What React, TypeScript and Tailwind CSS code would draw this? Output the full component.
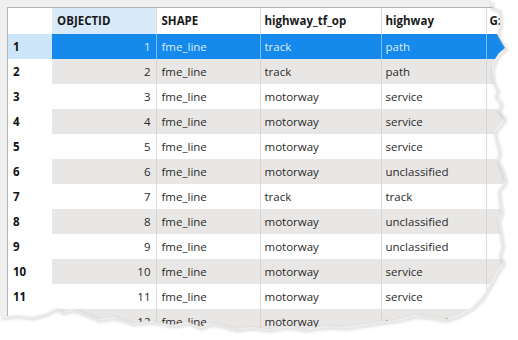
import React from 'react';

// attribute table rows: id, highway_tf_op, highway
const rows: [number, string, string][] = [
  [1, 'track', 'path'],
  [2, 'track', 'path'],
  [3, 'motorway', 'service'],
  [4, 'motorway', 'service'],
  [5, 'motorway', 'service'],
  [6, 'motorway', 'unclassified'],
  [7, 'track', 'track'],
  [8, 'motorway', 'unclassified'],
  [9, 'motorway', 'unclassified'],
  [10, 'motorway', 'service'],
  [11, 'motorway', 'service'],
  [12, 'motorway', 'unclassified'],
];

// torn paper edge, right side then bottom
const tear: [number, number][] = [
  [491, 0], [491, 7], [499, 10], [500, 24], [497, 34], [502, 43], [505, 48], [499, 53], [495, 59],
  [492, 66], [492, 76], [494, 84], [497, 90], [495, 96], [501, 103], [498, 110], [504, 118],
  [500, 124], [494, 131], [496, 141], [499, 151], [497, 160], [502, 170], [505, 181], [498, 190],
  [499, 200], [501, 212], [498, 220], [500, 232], [502, 245], [499, 255], [503, 262], [497, 271],
  [490, 284], [482, 297], [472, 307], [458, 315], [446, 319], [432, 317], [416, 315], [400, 319],
  [385, 321], [365, 324], [345, 327], [325, 326], [305, 329], [288, 326], [270, 329], [252, 327],
  [236, 329], [222, 325], [210, 323], [200, 327], [188, 322], [172, 325], [152, 321], [133, 323],
  [115, 317], [98, 319], [84, 313], [72, 309], [63, 312], [56, 308], [46, 313], [32, 317],
  [16, 315], [0, 317],
];

const TornEdge = () => {
  const line = tear.map(([x, y], i) => `${i ? 'L' : 'M'}${x} ${y}`).join(' ');
  const outside = `${line} L0 340 L518 340 L518 0 Z`;
  return (
    <svg className="absolute inset-0" width="518" height="340" viewBox="0 0 518 340">
      <defs>
        <filter id="blur" x="-10%" y="-10%" width="120%" height="120%">
          <feGaussianBlur stdDeviation="1.6" />
        </filter>
      </defs>
      <path d={outside} fill="#ffffff" />
      <path
        d={line}
        fill="none"
        stroke="#9a9a9a"
        strokeWidth="2.5"
        opacity="0.4"
        filter="url(#blur)"
        transform="translate(1.5 2)"
      />
    </svg>
  );
};

export default function App() {
  return (
    <div
      className="relative w-[518px] h-[340px] overflow-hidden bg-white text-[11.5px] text-[#2a2a2a]"
      style={{ fontFamily: '"Open Sans", "Noto Sans", sans-serif' }}
    >
      <div className="h-full pt-[7px] pl-[7px] bg-[#f0f0f0]">
        <div className="h-full border-t border-l border-[#b4b4b4] bg-white">
          <table className="table-fixed border-collapse w-[560px]">
            <colgroup>
              <col className="w-[44px]" />
              <col className="w-[104px]" />
              <col className="w-[104px]" />
              <col className="w-[121px]" />
              <col className="w-[105px]" />
              <col className="w-[82px]" />
            </colgroup>
            <thead>
              <tr className="h-[26px] font-bold text-[#1a1a1a]">
                <th className="bg-white" />
                <th className="bg-[#d9ebf9] border-r border-[#dcdcdc] text-left pl-[5px]">OBJECTID</th>
                <th className="border-r border-[#dcdcdc] text-left pl-[5px]">SHAPE</th>
                <th className="border-r border-[#dcdcdc] text-left pl-[4px]">highway_tf_op</th>
                <th className="border-r border-[#dcdcdc] text-left pl-[4px]">highway</th>
                <th className="text-left pl-[3px]">G:</th>
              </tr>
            </thead>
            <tbody>
              {rows.map(([id, op, hw]) => {
                const sel = id === 1;
                const even = id % 2 === 0;
                const cell = sel
                  ? 'bg-[#1589ec] text-[#dcedfd] border-r border-[#7fbcf2]'
                  : even
                  ? 'bg-[#e8e7e5] border-r border-[#d6d6d6]'
                  : 'bg-white border-r border-[#dcdcdc]';
                return (
                  <tr key={id} className="h-[25px]">
                    <td className={`font-bold pl-[5px] text-[#111] ${sel ? 'bg-[#cde5f8]' : 'bg-white'}`}>{id}</td>
                    <td className={`${cell} text-right pr-[5px]`}>{id}</td>
                    <td className={`${cell} pl-[5px]`}>fme_line</td>
                    <td className={`${cell} pl-[4px]`}>{op}</td>
                    <td className={`${cell} pl-[4px]`}>{hw}</td>
                    <td className={sel ? 'bg-[#1589ec]' : even ? 'bg-[#e8e7e5]' : 'bg-white'} />
                  </tr>
                );
              })}
            </tbody>
          </table>
        </div>
      </div>
      <TornEdge />
    </div>
  );
}
